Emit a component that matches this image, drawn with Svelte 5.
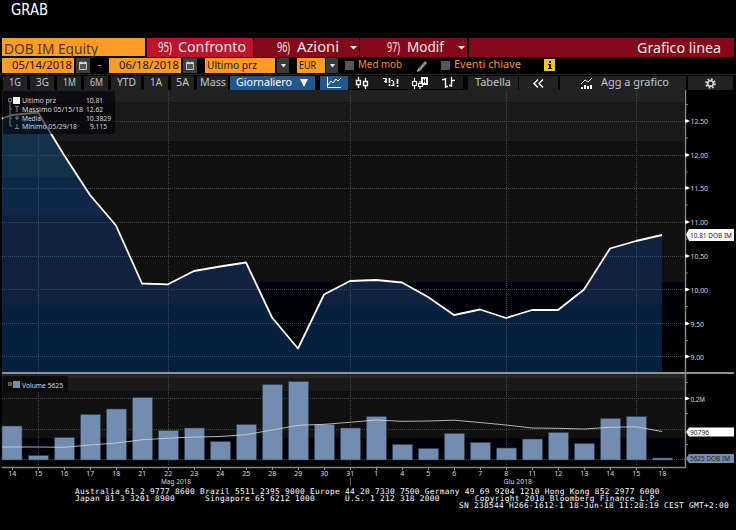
<script>
  const days = [14,15,16,17,18,21,22,23,24,25,28,29,30,31,1,4,5,6,7,8,11,12,13,14,15,18];
  const dayX = (i) => 12 + i * 26;
  const priceY = [115,112.5,155,195,225.5,283.5,284.3,271,266.5,262.5,317.5,348.5,294.5,281,280,282.5,297,315,309.5,318,310,310,289.5,248.5,241,235];
  const line = '2,118.5 ' + priceY.map((y, i) => `${dayX(i)},${y}`).join(' ');
  const volumeTop = [426,455.5,437.5,414.5,409,397.5,430.5,428,441.5,424.5,384.5,381.5,424.5,428,416.5,444.5,448.5,433.5,442.5,448,439,432.5,443.5,418.5,416.5,458];
  const average = '2,447 38,447 64,447.3 90,445 116,443 142,439.8 168,438.2 194,437 220,436.5 246,434.7 272,430 298,425.3 324,424.3 350,422.3 376,420 402,421.3 428,421 454,420.2 480,422.5 506,425 532,428 558,428.3 584,429 610,427.3 636,426.8 662,431.5';
  const ticks = [[121,'12.50'],[155,'12.00'],[188,'11.50'],[222,'11.00'],[256,'10.50'],[289.5,'10.00'],[323.5,'9.50'],[356.5,'9.00']];
  const gridX = [38.5, 168.5, 350.5, 506.5, 636.5];
  const ranges = [['1G',24,12],['3G',24,13],['1M',24,13],['6M',24,13],['YTD',30,19],['1A',24,12],['5A',23,13],['Mass',31,26]];
  const tabs = [['95)',14,'Confronto',68,106],['96)',13,'Azioni',42,105],['97)',13,'Modif',37,107]];
  const legend = [['Ultimo prz',34,'10.81',17,86],['Massimo 05/15/18',61,'12.62',17,86],['Media',19,'10.3829',25,86],['Minimo 05/29/18',55,'9.115',17,90]];
  const contacts = [
    'Australia 61 2 9777 8600 Brazil 5511 2395 9000 Europe 44 20 7330 7500 Germany 49 69 9204 1210 Hong Kong 852 2977 6000',
    'Japan 81 3 3201 8900      Singapore 65 6212 1000      U.S. 1 212 318 2000       Copyright 2018 Bloomberg Finance L.P.'
  ].join('\n');
</script>

{#snippet fit(text, width, size, height, base)}
  <svg class="fit" {width} {height}><text x="0" y={base} font-size={size} textLength={width} lengthAdjust="spacingAndGlyphs">{text}</text></svg>
{/snippet}

{#snippet label(text, x, y, width, kind = '')}
  <text class={kind} {x} {y} textLength={width} lengthAdjust="spacingAndGlyphs">{text}</text>
{/snippet}

{#snippet calendar()}
  <span class="cal"><svg width="10" height="12" viewBox="0 0 10 12"><path d="M1.500 3.500h7v6h-7z" fill="#55544e" stroke="#c5c2b8"/><path d="M1 3h8M3 1.500v2M7 1.500v2" stroke="#ddd" stroke-width="1.300"/></svg></span>
{/snippet}

{#snippet drop()}
  <span class="drop"><svg width="7" height="5"><path d="M1 1h5L3.5 4.5z" fill="#eee"/></svg></span>
{/snippet}

<main>
  <div class="grab">{@render fit('GRAB', 37, 16, 22, 15)}</div>

  <header>
    <div class="security">{@render fit('DOB IM Equity', 94, 15, 19, 16)}</div>
    {#each tabs as [num, nw, name, w, width], i}
      <button class="tab" class:bright={i === 0} class:last={i === 2} style:width="{width}px">
        {@render fit(num, nw, 15, 19, 14)}
        {@render fit(name, w, 15, 19, 14)}
        {#if i > 0}<svg class="caret" width="7" height="5"><path d="M0 1h7L3.5 4.5z" fill="#fff"/></svg>{/if}
      </button>
    {/each}
    <div class="title">{@render fit('Grafico linea', 84, 15, 19, 15)}</div>
  </header>

  <div class="fields">
    <span class="field date">{@render fit('05/14/2018', 60, 11, 15, 11)}</span>
    {@render calendar()}
    <span class="dash">-</span>
    <span class="field date">{@render fit('06/18/2018', 60, 11, 15, 11)}</span>
    {@render calendar()}
    <span class="field source">{@render fit('Ultimo prz', 50, 11, 15, 11)}</span>
    {@render drop()}
    <span class="field currency">{@render fit('EUR', 17, 11, 15, 11)}</span>
    {@render drop()}
    <span class="check"></span>
    <span class="option">{@render fit('Med mob', 44, 11, 15, 11)}</span>
    <svg class="pencil" width="12" height="13"><path d="M2.500 10.500 9 3" stroke="#777" stroke-width="3"/><path d="M3 10 9 3" stroke="#aaa"/><path d="m0 13 1.200-4 2.300 2.400z" fill="#bbb"/></svg>
    <span class="check second"></span>
    <span class="option">{@render fit('Eventi chiave', 67, 11, 15, 11)}</span>
    <svg class="info" width="11" height="12"><path d="M0 0h11v12H0z" fill="#efc81d"/><path d="M5 2h2v2H5zM4 5h3v4h1v1H4V9h1V6H4z" fill="#111"/></svg>
  </div>

  <nav>
    {#each ranges as [name, width, w]}
      <button style:width="{width}px">{@render fit(name, w, 11, 14, 10)}</button>
    {/each}
    <button class="period">{@render fit('Giornaliero', 56, 11, 14, 10)}<svg width="8" height="8"><path d="M0 0h8L4 8z" fill="#fff"/></svg></button>
    <div class="types">
      <span class="type active"><svg width="16" height="12"><path d="M1.500 0v10.500H15M2 8 5 4l2 2 3-4 2 2 3-3" fill="none" stroke="#fff"/></svg></span>
      <span class="type"><svg width="14" height="12"><path d="M3.500 0v3m0 5v3M10.500 1v3m0 5v3M1.500 3.500h4v4h-4zM8.500 4.500h4v4h-4z" fill="none" stroke="#fff" stroke-width="1.300"/></svg></span>
      <span class="type"><svg width="16" height="12"><path d="M0 1.500h3M1 4.500h3M8 3.500h2M8 8.500h2" stroke="#fff"/><path d="M3 1v5M6.500 1v8M10.500 4v6M14.500 2v8" stroke="#fff" stroke-width="1.600" stroke-dasharray="5 1"/></svg></span>
      <span class="type"><svg width="17" height="13"><path d="M3.500 1v3m0 5v3M9 4v3m0 3v2M1.500 4.500h4v4h-4zM7.500 6.500h4v3h-4z" fill="none" stroke="#fff" stroke-width="1.200"/><path d="M10 0h7v8h-5V6h-2z" fill="#fff"/><path d="M12.500 2v4m2-4v4m-2-2h2" stroke="#111"/></svg></span>
      <span class="type"><svg width="13" height="12"><path d="M3.500 1v10M0 2.500h3M4 9.500h2M9.500 0v10M7 8.500h2M10 3.500h3" fill="none" stroke="#fff" stroke-width="1.300"/></svg></span>
    </div>
    <button class="table">{@render fit('Tabella', 36, 11, 14, 10)}</button>
    <button class="collapse"><svg width="11" height="9"><path d="M5 .5 1 4.500l4 4M10 .5l-4 4 4 4" fill="none" stroke="#fff" stroke-width="1.400"/></svg></button>
    <button class="add"><svg width="12" height="11"><path d="M0 6 4 2l3 2 4-4" fill="none" stroke="#eee"/><path d="M0 9h2v2H0zM3 7h2v4H3zM6 8h2v3H6zM9 7h2v4H9z" fill="#fff"/></svg>{@render fit('Agg a grafico', 68, 11, 14, 10)}</button>
    <button class="settings"><svg width="11" height="11" viewBox="0 0 11 11"><circle cx="5.500" cy="5.500" r="4.300" fill="none" stroke="#ddd" stroke-width="2" stroke-dasharray="1.700 1.677"/><circle cx="5.500" cy="5.500" r="2.800" fill="none" stroke="#ddd" stroke-width="1.500"/></svg></button>
  </nav>

  <svg class="chart" width="736" height="396" viewBox="0 90 736 396">
    <defs>
      <clipPath id="area"><polygon points="{line} 662,372 2,372"/></clipPath>
    </defs>

    <g shape-rendering="crispEdges">
      <path d="M2 90h682v12H2z" fill="#212121"/>
      <path d="M2 102h682v39H2z" fill="#191919"/>
      <path d="M2 141h682v141H2z" fill="#101010"/>
      <path d="M2 282h682v54H2z" fill="#000009"/>
      <path d="M2 374h683v4H2z" fill="#242424"/>
      <path d="M2 378h683v13H2z" fill="#1a1a1a"/>
      <path d="M2 391h683v47H2z" fill="#101010"/>
      <path d="M2 438h683v22H2z" fill="#000009"/>
    </g>
    <g class="grid">
      {#each ticks as [y]}<path d="M2 {Math.floor(y) + .5}H683"/>{/each}
      {#each gridX as x}<path d="M{x} 91V372M{x} 376V466"/>{/each}
      {#each [398.5, 429.5, 459.5] as y}<path d="M2 {y}H685"/>{/each}
    </g>

    <g clip-path="url(#area)">
      <path d="M2 90h660v87H2z" fill="#12324a"/>
      <path d="M2 177h660v38H2z" fill="#0f2849"/>
      <path d="M2 215h660v90H2z" fill="#112140"/>
      <path d="M2 305h660v67H2z" fill="#072040"/>
      <g class="grid blue">
        {#each ticks as [y]}<path d="M2 {Math.floor(y) + .5}H662"/>{/each}
        {#each gridX as x}<path d="M{x} 91V372"/>{/each}
      </g>
    </g>
    <polyline points={line} fill="none" stroke="#fff" stroke-width="1.8" stroke-linejoin="round"/>

    {#each volumeTop as y, i}
      <rect x={i === 0 ? 2 : dayX(i) - 9.5} {y} width="20" height={460 - y} fill="#748caf" stroke="#2f3b4e" stroke-width=".6"/>
    {/each}
    <polyline points={average} fill="none" stroke="#d5dbdc" stroke-opacity=".8"/>

    <path d="M2 373H734" stroke="#90908e" stroke-width="2"/>
    <path d="M685.500 90V468M2 467.500H686" stroke="#858585" stroke-width="1.500"/>
    {#each ticks as [y, value], i}
      <path d="M685 {y - 1.5}h2l3 1.500-3 1.500h-2z" fill="#fff"/>
      {#if i < 7}<path d="M686 {y + 17}h1.500" stroke="#aaa"/>{/if}
      {@render label(value, 690.5, y + 3, value.length === 5 ? 17.5 : 13.5)}
    {/each}
    <path d="M686 104.500h1.500M686 382.500h1.500M686 413.500h1.500M686 444.500h1.500" stroke="#aaa"/>
    <path d="M685 397h2l3 1.500-3 1.500h-2z" fill="#fff"/>
    {@render label('0.2M', 690.5, 401.5, 14.5)}

    <path d="m686 234.500 3-5.500h45v12h-45z" fill="#fff"/>
    {@render label('10.81 DOB IM', 690, 237.5, 42, 'dark')}
    <path d="m686 432 3-4.500h45v9h-45z" fill="#fff"/>
    {@render label('90796', 690, 434.8, 19, 'dark')}
    <path d="m686 458.500 3-4.500h45v9h-45z" fill="#748caf"/>
    {@render label('5625 DOB IM', 690, 461.3, 40, 'dark')}

    {#each days as day, i}
      <path d="M{dayX(i) + .5} 467v3" stroke="#999"/>
      {@render label(day, dayX(i) - (day > 9 ? 4 : 2) + .3, 476, day > 9 ? 8 : 4)}
    {/each}
    <path d="M350.500 477v9" stroke="#555"/>
    {@render label('Mag 2018', 161, 484.3, 30)}
    {@render label('Giu 2018', 503.5, 484.3, 28.5)}

    <rect x="3" y="91" width="112" height="43" rx="2" fill="#000008" fill-opacity=".62"/>
    <path d="M8.500 98.500h3v3h-3zM10 101v25h2" fill="none" stroke="#777"/>
    <path d="M10 109h2M10 118h2M15 106.500h4M17 107v5M15 118h4M17 116v4M15 128.500h4M17 124v4" stroke="#808080"/>
    <path d="M13 97h7v7h-7z" fill="#fff"/>
    {#each legend as [name, nw, value, vw, vx], i}
      {@render label(name, 22, 103.3 + i * 8.7, nw)}
      {@render label(value, vx, 103.3 + i * 8.7, vw)}
    {/each}
    <rect x="3" y="376" width="65" height="16" rx="2" fill="#080808" fill-opacity=".8"/>
    <path d="M8.500 382.500h3v3h-3z" fill="#444" stroke="#666"/>
    <path d="M13 381h7v7h-7z" fill="#748caf"/>
    {@render label('Volume 5625', 22, 387.5, 41)}
  </svg>

  <footer>
    <pre>{contacts}</pre>
    <pre class="serial">SN 238544 H266-1612-1 18-Jun-18 11:28:19 CEST GMT+2:00</pre>
  </footer>
</main>

<style>
  :global(body) { background: #000; }
  main { width: 736px; height: 530px; overflow: hidden; background: #000; color: #fff; font-family: "Noto Sans", sans-serif; display: flex; flex-direction: column; }
  main > * { flex: none; }
  .fit { display: block; overflow: visible; fill: currentColor; flex: none; }
  button { border: 0; padding: 0; margin: 0; font: inherit; color: inherit; }
  .grab { height: 38px; padding-left: 11px; font-family: "DejaVu Sans", sans-serif; }
  header { display: flex; height: 19px; padding: 0 2px; gap: 1px; }
  .security { width: 143px; height: 18px; background: #ff9c27; color: #4a3a1a; padding-left: 2px; box-sizing: border-box; margin-right: 1px; }
  .tab { display: flex; gap: 7px; background: #850a19; padding-left: 23px; box-sizing: border-box; position: relative; color: #f3e8e8; }
  .tab.bright { background: #bd132c; padding-left: 11px; gap: 6px; }
  .tab.last { padding-left: 27px; }
  .caret { position: absolute; right: 2px; top: 7px; }
  .title { flex: 1; background: #850a19; display: flex; justify-content: flex-end; padding-right: 13px; color: #f3e8e8; margin-left: 1px; }
  .fields { display: flex; height: 17px; align-items: flex-start; padding-left: 2px; }
  .fields > * { flex: none; }
  .field { height: 15px; margin-top: 1px; background: #ff9c27; color: #191309; box-sizing: border-box; padding-left: 2px; }
  .date { width: 72px; padding-left: 10px; }
  .source { width: 70px; margin-left: 8px; }
  .currency { width: 28px; margin-left: 8px; }
  .cal { width: 14px; height: 15px; margin: 1px 0 0 2px; background: #3e3e3e; display: flex; align-items: center; justify-content: center; }
  .dash { width: 19px; text-align: center; color: #f69325; font-size: 12px; line-height: 16px; }
  .drop { width: 12px; height: 15px; margin: 1px 0 0 2px; background: #3b3b3b; display: flex; align-items: center; justify-content: center; }
  .currency + .drop { margin-left: 1px; }
  .check { width: 9px; height: 9px; margin: 4px 4px 0 7px; background: #555; }
  .check.second { margin-left: 12px; }
  .option { color: #f69325; }
  .pencil { margin: 2px 0 0 15px; }
  .info { margin: 2px 0 0 23px; }
  nav { display: flex; gap: 3px; height: 16px; padding: 1px 2px 1px 3px; box-sizing: border-box; border-top: 1px solid #252525; }
  nav button { height: 14px; background: #222; color: #bec6cc; display: flex; align-items: center; justify-content: center; flex: none; }
  nav .period { width: 85px; background: #22578b; color: #fff; gap: 8px; margin-left: -1px; box-sizing: border-box; padding-right: 1px; }
  .types { display: flex; width: 143px; background: #191919; margin-left: 2px; }
  .type { width: 29px; height: 14px; display: flex; align-items: center; justify-content: center; }
  .type.active { width: 28px; background: #22578b; }
  nav .table { width: 50px; margin-left: 2px; }
  nav .collapse { width: 39px; margin-left: -2px; }
  nav .add { width: 126px; gap: 8px; margin-left: -1px; box-sizing: border-box; padding-left: 4px; }
  nav .settings { width: 45px; margin-left: -1px; }
  .chart { display: block; font-size: 7.6px; }
  .chart text { fill: #d8d8d8; }
  .chart text.dark { fill: #222; }
  .grid path { stroke: #484848; stroke-dasharray: 1 1; fill: none; }
  .grid.blue path { stroke: #285269; }
  footer { padding: 2px 7px 0 75px; }
  pre { margin: 0; font: 7.8px/7px "DejaVu Sans Mono", monospace; letter-spacing: .304px; color: #fff; }
  .serial { text-align: right; }
</style>
